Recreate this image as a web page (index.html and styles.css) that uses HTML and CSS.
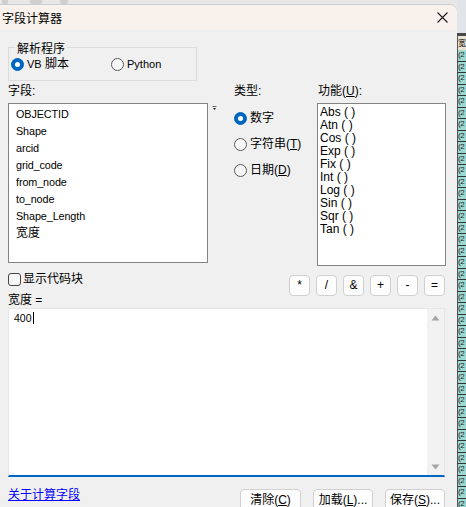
FILE: index.html
```html
<!DOCTYPE html>
<html lang="zh">
<head>
<meta charset="utf-8">
<title>字段计算器</title>
<link rel="stylesheet" href="styles.css">
</head>
<body>
<div class="screen">
  <div class="main">
    <div class="taskstrip">
      <span class="ghost g1"></span><span class="ghost g2"></span><span class="ghost g3"></span>
    </div>
    <div class="dialog">
      <div class="titlebar">
        <span class="title">字段计算器</span>
        <svg class="close" width="11" height="11" viewBox="0 0 11 11"><path d="M0.5 0.5L10.5 10.5M10.5 0.5L0.5 10.5" stroke="#1b1b1b" stroke-width="1.1" fill="none"/></svg>
      </div>
      <div class="content">
        <div class="group">
          <span class="legend">解析程序</span>
          <div class="parser-row">
            <label class="opt first"><span class="radio on"></span><span class="txt"><span class="lat">VB</span> 脚本</span></label>
            <label class="opt"><span class="radio"></span><span class="txt lat">Python</span></label>
          </div>
        </div>

        <div class="fields-grid">
          <div class="lbl">字段:</div>
          <div></div>
          <div class="lbl">类型:</div>
          <div class="lbl lbl-func">功能(<u>U</u>):</div>

          <div class="listbox fields">
            <div class="item">OBJECTID</div>
            <div class="item">Shape</div>
            <div class="item">arcid</div>
            <div class="item">grid_code</div>
            <div class="item">from_node</div>
            <div class="item">to_node</div>
            <div class="item">Shape_Length</div>
            <div class="item cjk">宽度</div>
          </div>
          <div class="arrowcol">
            <svg width="5" height="5" viewBox="0 0 5 5"><path d="M0.5 0.5H4.5" stroke="#666" stroke-width="1"/><path d="M1 2H4L2.5 4Z" fill="#222"/></svg>
          </div>
          <div class="types">
            <label class="opt"><span class="radio on"></span><span class="txt">数字</span></label>
            <label class="opt"><span class="radio"></span><span class="txt">字符串(<u>T</u>)</span></label>
            <label class="opt"><span class="radio"></span><span class="txt">日期(<u>D</u>)</span></label>
          </div>
          <div class="listbox funcs">
            <div class="fitem">Abs ( )</div>
            <div class="fitem">Atn ( )</div>
            <div class="fitem">Cos ( )</div>
            <div class="fitem">Exp ( )</div>
            <div class="fitem">Fix ( )</div>
            <div class="fitem">Int ( )</div>
            <div class="fitem">Log ( )</div>
            <div class="fitem">Sin ( )</div>
            <div class="fitem">Sqr ( )</div>
            <div class="fitem">Tan ( )</div>
          </div>
        </div>

        <div class="mid-row">
          <div class="mid-left">
            <label class="check"><span class="box"></span><span class="txt">显示代码块</span></label>
            <div class="expr-label">宽度 =</div>
          </div>
          <div class="ops">
            <button class="op">*</button>
            <button class="op">/</button>
            <button class="op">&amp;</button>
            <button class="op">+</button>
            <button class="op">-</button>
            <button class="op">=</button>
          </div>
        </div>

        <div class="expr">
          <div class="expr-text">400<span class="caret"></span></div>
          <div class="vscroll">
            <svg width="9" height="6" viewBox="0 0 9 6"><path d="M0.5 5.5L4.5 0.5L8.5 5.5Z" fill="#a5a5a5"/></svg>
            <svg width="9" height="6" viewBox="0 0 9 6"><path d="M0.5 0.5L4.5 5.5L8.5 0.5Z" fill="#a5a5a5"/></svg>
          </div>
        </div>

        <div class="bottom-row">
          <a class="link" href="#">关于计算字段</a>
          <div class="btns">
            <button class="btn b1">清除(<u>C</u>)</button>
            <button class="btn">加载(<u>L</u>)...</button>
            <button class="btn">保存(<u>S</u>)...</button>
          </div>
        </div>
      </div>
    </div>
  </div>
  <div class="side">
    <div class="side-top"></div>
    <div class="side-dark"></div>
    <div class="side-head">宽</div>
    <div class="cell">(2</div><div class="cell">(2</div><div class="cell">(2</div><div class="cell">(2</div>
    <div class="cell">(2</div><div class="cell">(2</div><div class="cell">(2</div><div class="cell">(2</div>
    <div class="cell">(2</div><div class="cell">(2</div><div class="cell">(2</div><div class="cell">(2</div>
    <div class="cell">(2</div><div class="cell">(2</div><div class="cell">(2</div><div class="cell">(2</div>
    <div class="cell">(2</div><div class="cell">(2</div><div class="cell">(2</div><div class="cell">(2</div>
    <div class="cell">(2</div><div class="cell">(2</div><div class="cell">(2</div><div class="cell">(2</div>
    <div class="cell">(2</div><div class="cell">(2</div><div class="cell">(2</div><div class="cell">(2</div>
    <div class="cell">(2</div><div class="cell">(2</div><div class="cell">(2</div><div class="cell">(2</div>
    <div class="cell">(2</div><div class="cell">(2</div><div class="cell">(2</div><div class="cell">(2</div>
    <div class="cell">(2</div><div class="cell">(2</div><div class="cell">(2</div><div class="cell">(2</div>
  </div>
</div>
</body>
</html>
```

FILE: styles.css
```css
* { box-sizing: border-box; }
html, body { margin: 0; padding: 0; }
body {
  width: 466px;
  height: 507px;
  overflow: hidden;
  background: #e6e6e6;
  font-family: "Liberation Sans", "Noto Sans CJK SC", sans-serif;
  font-size: 12px;
  line-height: 14px;
  color: #000;
}
u { text-decoration: underline; text-underline-offset: 1px; }

.screen { display: flex; width: 466px; height: 507px; overflow: hidden; }
.main { width: 457px; flex: none; display: flex; flex-direction: column; background: #e7e7e7; }

.taskstrip { height: 4px; flex: none; display: flex; gap: 8px; padding-left: 2px; overflow: hidden; }
.ghost { display: block; height: 4px; background: #cfcfcf; border-radius: 0 0 2px 2px; }
.g1 { width: 6px; }
.g2 { width: 12px; margin-left: 14px; }
.g3 { width: 8px; margin-left: 10px; }

.dialog {
  flex: 1;
  display: flex;
  flex-direction: column;
  background: #f0f0f0;
  border-top: 1px solid #cdcdcd;
  border-top-right-radius: 8px;
  overflow: hidden;
}
.titlebar {
  height: 25px;
  flex: none;
  display: flex;
  align-items: center;
  justify-content: space-between;
  background: #f9f1ec;
  padding: 0 9px 0 2px;
}
.title { font-family: "Noto Sans CJK SC", sans-serif; font-size: 12px; }
.close { display: block; }

.content { padding: 0 11px 0 8px; display: flex; flex-direction: column; }

/* parser group */
.group {
  margin-top: 17px;
  width: 189px;
  height: 34px;
  border: 1px solid #dcdcdc;
}
.legend {
  display: block;
  width: fit-content;
  margin: -6px 0 0 6px;
  padding: 0 2px;
  background: #f0f0f0;
  line-height: 14px;
}
.parser-row { display: flex; margin-top: 1px; height: 14px; }
.opt { display: flex; align-items: center; gap: 3px; height: 14px; white-space: nowrap; }
.opt.first { width: 100px; margin-left: 2px; }
.txt { display: block; line-height: 14px; }
.lat { font-size: 11px; }

.radio {
  width: 13px;
  height: 13px;
  flex: none;
  border: 1px solid #5a5a5a;
  border-radius: 50%;
  background: #f7f7f7;
  display: flex;
  align-items: center;
  justify-content: center;
}
.radio.on { background: #0067c0; border-color: #0067c0; }
.radio.on::after {
  content: "";
  width: 5px;
  height: 5px;
  border-radius: 50%;
  background: #fff;
}

/* fields / type / functions */
.fields-grid {
  margin-top: 3px;
  display: grid;
  grid-template-columns: 200px 26px 83px 129px;
  grid-template-rows: 19px auto;
}
.lbl { line-height: 14px; }
.lbl-func { padding-left: 1px; }

.listbox { background: #fff; border: 1px solid #838383; }
.fields { height: 160px; padding: 2px 0 0 7px; align-self: start; }
.item { font-size: 10.8px; line-height: 17px; height: 17px; white-space: nowrap; letter-spacing: -0.1px; }
.item.cjk { font-size: 12px; letter-spacing: 0; }
.arrowcol { padding: 3px 0 0 4px; }
.arrowcol svg { display: block; }

.types { display: flex; flex-direction: column; gap: 12px; padding-top: 8px; }

.funcs { height: 163px; padding: 2px 0 0 2px; }
.fitem { font-size: 12px; line-height: 13px; height: 13px; white-space: nowrap; }

/* checkbox + operators */
.mid-row {
  margin-top: 6px;
  height: 36px;
  display: flex;
  justify-content: space-between;
  align-items: flex-start;
}
.check { display: flex; align-items: center; gap: 2px; height: 14px; }
.box {
  width: 13px;
  height: 13px;
  border: 1px solid #444;
  border-radius: 3px;
  background: #f7f7f7;
}
.expr-label { margin-top: 7px; line-height: 14px; }
.ops { display: flex; gap: 6px; margin-top: 3px; margin-right: 1px; }
.op, .btn {
  font-family: "Liberation Sans", "Noto Sans CJK SC", sans-serif;
  font-size: 12px;
  color: #000;
  background: #fdfdfd;
  border: 1px solid #d0d0d0;
  border-radius: 4px;
  padding: 0;
  margin: 0;
}
.op { width: 21px; height: 21px; line-height: 19px; text-align: center; }

/* expression box */
.expr {
  height: 169px;
  width: 437px;
  display: flex;
  background: #fff;
  border: 1px solid #e6e6e6;
  border-bottom: 2px solid #0067c0;
}
.expr-text {
  flex: 1;
  padding: 3px 5px;
  font-size: 10.5px;
  line-height: 12px;
}
.caret {
  display: inline-block;
  width: 1px;
  height: 12px;
  background: #000;
  margin-left: 1px;
  vertical-align: top;
}
.vscroll {
  width: 17px;
  flex: none;
  background: #f2f2f2;
  display: flex;
  flex-direction: column;
  align-items: center;
  justify-content: space-between;
  padding: 6px 0 5px;
}
.vscroll svg { display: block; }

/* bottom row */
.bottom-row {
  padding-top: 10px;
  display: flex;
  justify-content: space-between;
  align-items: flex-start;
}
.link {
  color: #0000ff;
  text-decoration: underline;
  text-underline-offset: 1px;
  font-family: "Noto Sans CJK SC", sans-serif;
  line-height: 14px;
}
.btns { display: flex; gap: 12px; margin-top: 2px; margin-right: 1px; }
.btn { width: 60px; height: 23px; line-height: 21px; text-align: center; white-space: nowrap; }
.btn.b1 { width: 61px; }

/* background table strip */
.side {
  width: 9px;
  flex: none;
  display: flex;
  flex-direction: column;
  overflow: hidden;
  background: #9ed9d1;
}
.side-top { height: 33px; flex: none; background: #e1e4e8; }
.side-dark { height: 3px; flex: none; background: #4a4a4a; }
.side-head {
  height: 14px;
  flex: none;
  background: #ece3d2;
  border-left: 1px solid #555;
  font-family: "Noto Sans CJK SC", sans-serif;
  font-size: 8px;
  line-height: 14px;
  white-space: nowrap;
  overflow: hidden;
}
.cell {
  height: 11.5px;
  flex: none;
  border-left: 1px solid #555;
  border-bottom: 1px solid #333;
  background: #9ed9d1;
  color: #222;
  font-size: 8px;
  line-height: 10px;
  letter-spacing: -0.5px;
  white-space: nowrap;
  overflow: hidden;
}
```
